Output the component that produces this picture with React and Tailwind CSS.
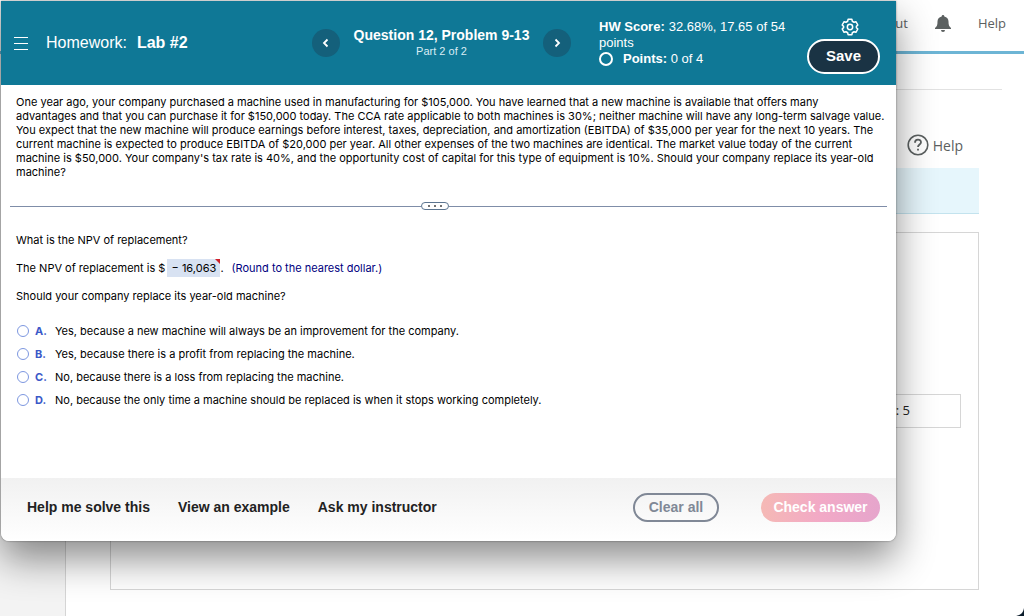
import { useState } from 'react';

const choices = [
  { letter: 'A', text: 'Yes, because a new machine will always be an improvement for the company.' },
  { letter: 'B', text: 'Yes, because there is a profit from replacing the machine.' },
  { letter: 'C', text: 'No, because there is a loss from replacing the machine.' },
  { letter: 'D', text: 'No, because the only time a machine should be replaced is when it stops working completely.' },
];

const problemLines = [
  'One year ago, your company purchased a machine used in manufacturing for $105,000. You have learned that a new machine is available that offers many',
  'advantages and that you can purchase it for $150,000 today. The CCA rate applicable to both machines is 30%; neither machine will have any long-term salvage value.',
  'You expect that the new machine will produce earnings before interest, taxes, depreciation, and amortization (EBITDA) of $35,000 per year for the next 10 years. The',
  'current machine is expected to produce EBITDA of $20,000 per year. All other expenses of the two machines are identical. The market value today of the current',
  "machine is $50,000. Your company's tax rate is 40%, and the opportunity cost of capital for this type of equipment is 10%. Should your company replace its year-old",
  'machine?',
];

function GearIcon() {
  return (
    <svg viewBox="0 0 24 24" className="size-5" fill="none" stroke="currentColor" strokeWidth="1.8" strokeLinejoin="round">
      <path d="M9.700 2.800h4.600l.5 2.300 2 1.200 2.300-.7 2.300 4-1.700 1.600v1.600l1.700 1.600-2.300 4-2.300-.7-2 1.200-.5 2.300H9.700l-.5-2.300-2-1.200-2.300.7-2.300-4 1.700-1.600v-1.600L2.600 9.600l2.300-4 2.300.7 2-1.200z" />
      <circle cx="12" cy="12" r="3.200" />
    </svg>
  );
}

function BellIcon() {
  return (
    <svg viewBox="0 0 16 17" className="h-[17px] w-4" fill="currentColor">
      <path d="M8 0a1.300 1.300 0 0 0-1.300 1.400C4 2 2.500 4 2.500 6.500c0 3.500-.5 4.800-2.500 6.500v1h16v-1c-2-1.700-2.500-3-2.500-6.500 0-2.500-1.500-4.500-4.200-5.100A1.300 1.300 0 0 0 8 0zM6 15a2 2 0 0 0 4 0z" />
    </svg>
  );
}

function ArrowButton({ label, d }) {
  return (
    <button aria-label={label} className="flex size-7 items-center justify-center rounded-full bg-[#14607b]">
      <svg viewBox="0 0 8 10" className="h-2.5 w-2" fill="none" stroke="white" strokeWidth="1.8">
        <path d={d} />
      </svg>
    </button>
  );
}

function Header() {
  return (
    <header className="flex h-[84px] items-center bg-[#0f7896] text-white">
      <button aria-label="Menu" className="ml-[13px]">
        <svg viewBox="0 0 14 13" className="h-[13px] w-3.5" stroke="white">
          <path d="M0 .5h14M0 6.500h14M0 12.500h14" />
        </svg>
      </button>
      <h1 className="ml-[18px] flex flex-1 gap-2.5 text-[16px]">
        <span>Homework:</span>
        <b>Lab #2</b>
      </h1>
      <nav className="flex items-center">
        <ArrowButton label="Previous question" d="M5.500 1.500 2 5l3.500 3.500" />
        <div className="w-[203px] text-center">
          <h2 className="text-[14px] leading-4 font-bold">Question 12, Problem 9-13</h2>
          <p className="text-[11px] leading-4 text-[#d9edf5]">Part 2 of 2</p>
        </div>
        <ArrowButton label="Next question" d="M2.500 1.500 6 5 2.500 8.500" />
      </nav>
      <div className="ml-7 w-[208px] text-[13px] leading-4">
        <p className="flex gap-1"><b>HW Score:</b><span>32.68%, 17.65 of 54</span></p>
        <p>points</p>
        <p className="flex items-center gap-2.5">
          <span className="size-3.5 rounded-full border-2 border-white" />
          <span><b>Points:</b> 0 of 4</span>
        </p>
      </div>
      <div className="mr-4 flex flex-col items-center gap-0.5 pt-1">
        <button aria-label="Settings" className="ml-3"><GearIcon /></button>
        <button className="h-[35px] w-[73px] rounded-full border-2 border-white bg-[#1a3344] text-[15px] font-bold">Save</button>
      </div>
    </header>
  );
}

function Question() {
  const [answer, setAnswer] = useState('');
  return (
    <main className="px-[15px] pt-2.5 font-[Inter,sans-serif] text-[11px] leading-[14px] text-black">
      <p className="whitespace-nowrap">
        {problemLines.map((line) => <span key={line} className="block">{line}</span>)}
      </p>
      <div className="-mx-1.5 mt-5 flex h-3.5 items-center">
        <span className="h-px w-[411px] bg-[#7f8da8]" />
        <button aria-label="Resize" className="flex h-2 w-7 items-center justify-center gap-1 rounded-full border border-[#5c7590] bg-white">
          <i className="size-0.5 rounded-full bg-[#444]" />
          <i className="size-0.5 rounded-full bg-[#444]" />
          <i className="size-0.5 rounded-full bg-[#444]" />
        </button>
        <span className="h-px flex-1 bg-[#7f8da8]" />
      </div>
      <p className="mt-5">What is the NPV of replacement?</p>
      <p className="mt-3 flex h-[18px] items-center">
        <label htmlFor="npv">The NPV of replacement is $</label>
        <span className="relative ml-0.5">
          <input id="npv" defaultValue="− 16,063" className="h-[18px] w-[53px] bg-[#d8e2f2] text-center" />
          <svg viewBox="0 0 5 5" className="absolute top-0 right-0 size-[5px]" fill="#d0212a"><path d="M0 0h5v5z" /></svg>
        </span>
        <span>.</span>
        <span className="ml-2 text-[#000080]">(Round to the nearest dollar.)</span>
      </p>
      <p className="mt-3">Should your company replace its year-old machine?</p>
      <fieldset className="mt-4">
        {choices.map(({ letter, text }) => (
          <label key={letter} className="flex h-[23px] items-center">
            <input
              type="radio"
              name="answer"
              value={letter}
              checked={answer === letter}
              onChange={() => setAnswer(letter)}
              className="mr-1.5 ml-px size-3 appearance-none rounded-full border border-[#7d97e0] checked:bg-[#3a58c8]"
            />
            <b className="w-5 text-[#3a58c8]">{letter}.</b>
            <span>{text}</span>
          </label>
        ))}
      </fieldset>
    </main>
  );
}

function Footer() {
  return (
    <footer className="mt-[67px] flex h-[63px] items-center bg-linear-to-b from-[#f1f1f1] to-white pr-4 pb-1 pl-[26px] text-[14px] font-bold text-[#222]">
      <div className="flex flex-1 gap-7">
        <button>Help me solve this</button>
        <button>View an example</button>
        <button>Ask my instructor</button>
      </div>
      <button className="mr-[42px] h-[29px] w-[86px] rounded-full border-2 border-[#808896] text-[#808896]">Clear all</button>
      <button className="h-[29px] w-[119px] rounded-full bg-linear-to-r from-[#f5b9b5] via-[#f2a9c6] to-[#e6a5cc] text-white">Check answer</button>
    </footer>
  );
}

function CoursePage() {
  return (
    <div className="flex min-h-screen flex-col font-['Open_Sans','Noto_Sans',sans-serif] text-[13px] text-[#5b6060]">
      <header className="flex h-[54px] items-center justify-end gap-[27px] border-b-[3px] border-[#6db5d5] pr-[18px] pb-1">
        <span>ut</span>
        <BellIcon />
        <a href="#help">Help</a>
      </header>
      <div className="flex flex-1">
        <aside className="w-[66px] border-r border-[#d5d5d5] bg-[#f3f3f3]" />
        <div className="flex flex-1 flex-col pl-11">
          <div className="mr-[22px] h-9 border-b border-[#e2e2e2]" />
          <div className="mr-[45px] flex flex-1 flex-col">
            <a href="#page-help" className="flex h-[78px] items-center justify-end gap-1 pt-8 pr-4 text-[14px]">
              <svg viewBox="0 0 22 22" className="size-[22px]" fill="none" stroke="currentColor" strokeWidth="1.6">
                <circle cx="11" cy="11" r="9.800" />
                <path d="M8 8.700c0-4 6-4 6-.4 0 2.200-3 2.200-3 4.700M11 14.800v1.800" strokeWidth="1.800" />
              </svg>
              Help
            </a>
            <div className="h-[46px] border-b border-[#c3e3ee] bg-[#e6f6fc]" />
            <section className="mt-[18px] mb-[26px] flex flex-1 items-center justify-end border border-[#d6d6d6] pr-[17px]">
              <div className="flex h-[34px] w-[120px] items-center border border-[#d6d6d6] pl-[49px] text-[#222]">t: 5</div>
            </section>
          </div>
        </div>
      </div>
    </div>
  );
}

export default function App() {
  return (
    <div className="relative min-h-screen overflow-hidden bg-white">
      <CoursePage />
      <div
        role="dialog"
        aria-label="Homework question"
        className="absolute top-px right-32 left-px overflow-hidden rounded-b-lg bg-white font-['Liberation_Sans',Arial,sans-serif] shadow-[0_18px_38px_rgba(0,0,0,0.45),0_0_2px_rgba(0,0,0,0.5)]"
      >
        <Header />
        <Question />
        <Footer />
      </div>
      <svg viewBox="0 0 8 8" className="absolute right-0 bottom-0 size-2" fill="#0b1c2b">
        <path d="M8 0v8H0C5 7 7 5 8 0z" />
      </svg>
    </div>
  );
}
